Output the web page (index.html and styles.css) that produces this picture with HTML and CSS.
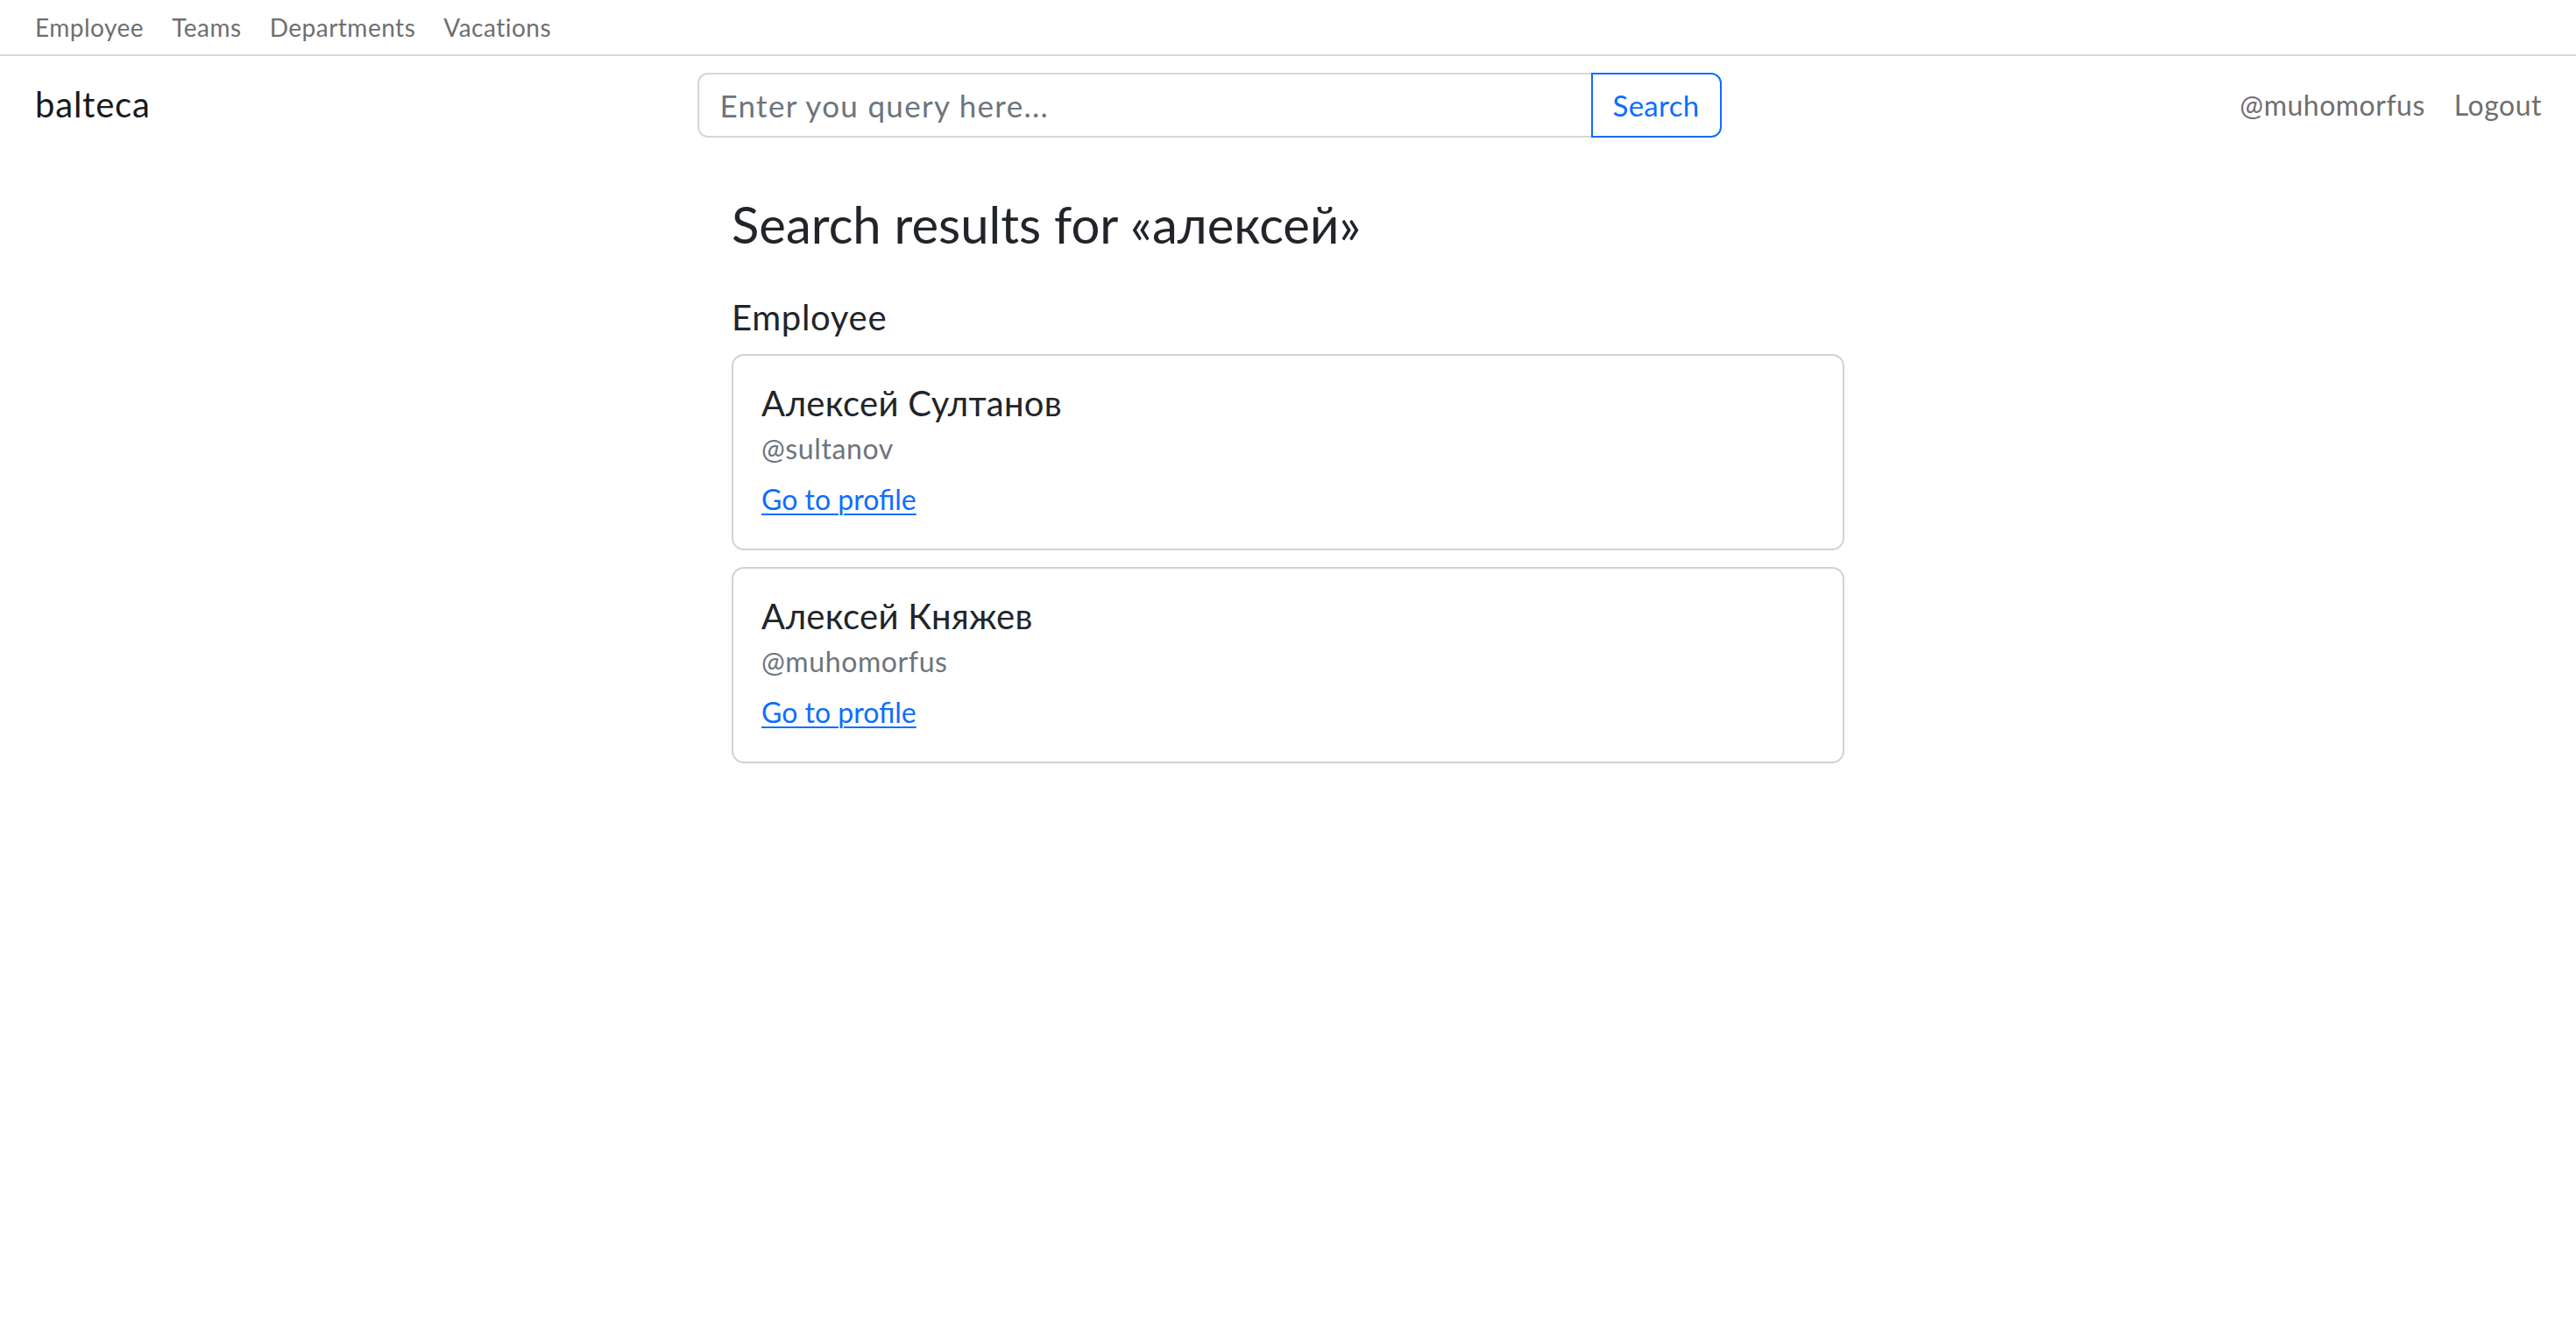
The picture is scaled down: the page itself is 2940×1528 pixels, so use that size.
FILE: index.html
```html
<!DOCTYPE html>
<html lang="en">
<head>
<meta charset="utf-8">
<title>balteca — Search</title>
<link rel="stylesheet" href="styles.css">
</head>
<body>
<nav class="topnav">
  <a class="topnav-link" href="#">Employee</a>
  <a class="topnav-link" href="#">Teams</a>
  <a class="topnav-link" href="#">Departments</a>
  <a class="topnav-link" href="#">Vacations</a>
</nav>
<header class="navbar">
  <a class="brand" href="#">balteca</a>
  <form class="search">
    <input class="search-input" type="text" placeholder="Enter you query here...">
    <button class="search-btn" type="button">Search</button>
  </form>
  <div class="user-nav">
    <a class="user-link" href="#">@muhomorfus</a>
    <a class="user-link" href="#">Logout</a>
  </div>
</header>
<main class="content">
  <h2 class="page-title">Search results for «алексей»</h2>
  <h5 class="section-title">Employee</h5>
  <div class="card">
    <h5 class="card-title">Алексей Султанов</h5>
    <h6 class="card-subtitle">@sultanov</h6>
    <a class="card-link" href="#">Go to profile</a>
  </div>
  <div class="card">
    <h5 class="card-title">Алексей Княжев</h5>
    <h6 class="card-subtitle">@muhomorfus</h6>
    <a class="card-link" href="#">Go to profile</a>
  </div>
</main>
</body>
</html>
```
FILE: styles.css
```css
* { box-sizing: border-box; }
html, body {
  margin: 0;
  padding: 0;
  background: #ffffff;
  font-family: "Lato", "Open Sans", "Noto Sans", sans-serif;
  color: #212529;
}
a { text-decoration: none; }

.topnav {
  display: flex;
  align-items: center;
  gap: 32px;
  height: 64px;
  padding: 0 40px;
  border-bottom: 2px solid #d6dade;
}
.topnav-link {
  font-size: 28px;
  line-height: 40px;
  letter-spacing: 0.5px;
  color: #6f6f6f;
}

.navbar {
  display: flex;
  align-items: center;
  padding: 19px 39px 19px 40px;
}
.brand {
  font-size: 40px;
  line-height: 48px;
  letter-spacing: 0.8px;
  color: #1a1a1a;
  margin-right: 32px;
  margin-bottom: 2px;
}
.search {
  display: flex;
  width: 1169px;
  height: 74px;
  margin: 0 auto;
}
.search-input {
  flex: 1;
  min-width: 0;
  height: 74px;
  border: 2px solid #d3d8dc;
  border-right: none;
  border-radius: 12px 0 0 12px;
  padding: 0 24px;
  font-family: inherit;
  font-size: 35px;
  letter-spacing: 1.3px;
  color: #212529;
  outline: none;
}
.search-input::placeholder { color: #6c757d; opacity: 1; }
.search-btn {
  width: 149px;
  height: 74px;
  border: 2px solid #0d6efd;
  border-radius: 0 12px 12px 0;
  background: #ffffff;
  color: #0d6efd;
  font-family: inherit;
  font-size: 33px;
  letter-spacing: 0.3px;
  padding: 0;
}
.user-nav {
  display: flex;
  gap: 33px;
}
.user-link {
  font-size: 32px;
  line-height: 48px;
  letter-spacing: 0.5px;
  color: #6f6f6f;
}

.content {
  width: 1270px;
  margin: 44px auto 0;
}
.page-title {
  margin: 0;
  font-size: 58px;
  line-height: 72px;
  font-weight: 400;
  color: #212529;
}
.section-title {
  margin: 46px 0 18px;
  font-size: 40px;
  line-height: 48px;
  letter-spacing: 0.7px;
  font-weight: 400;
  color: #212529;
}
.card {
  display: flex;
  flex-direction: column;
  align-items: flex-start;
  border: 2px solid #d2d2d2;
  border-radius: 14px;
  padding: 30px 32px 32px;
  margin-bottom: 19px;
}
.card-title {
  margin: 0;
  font-size: 40px;
  line-height: 48px;
  letter-spacing: 0.3px;
  font-weight: 400;
  color: #212529;
}
.card-subtitle {
  margin: 9px 0 0;
  font-size: 32px;
  line-height: 38px;
  letter-spacing: 0.6px;
  font-weight: 400;
  color: #6c757d;
}
.card-link {
  margin-top: 15px;
  font-size: 32px;
  line-height: 48px;
  color: #0d6efd;
  text-decoration: underline;
  text-underline-offset: 4px;
  text-decoration-thickness: 2px;
}
```
